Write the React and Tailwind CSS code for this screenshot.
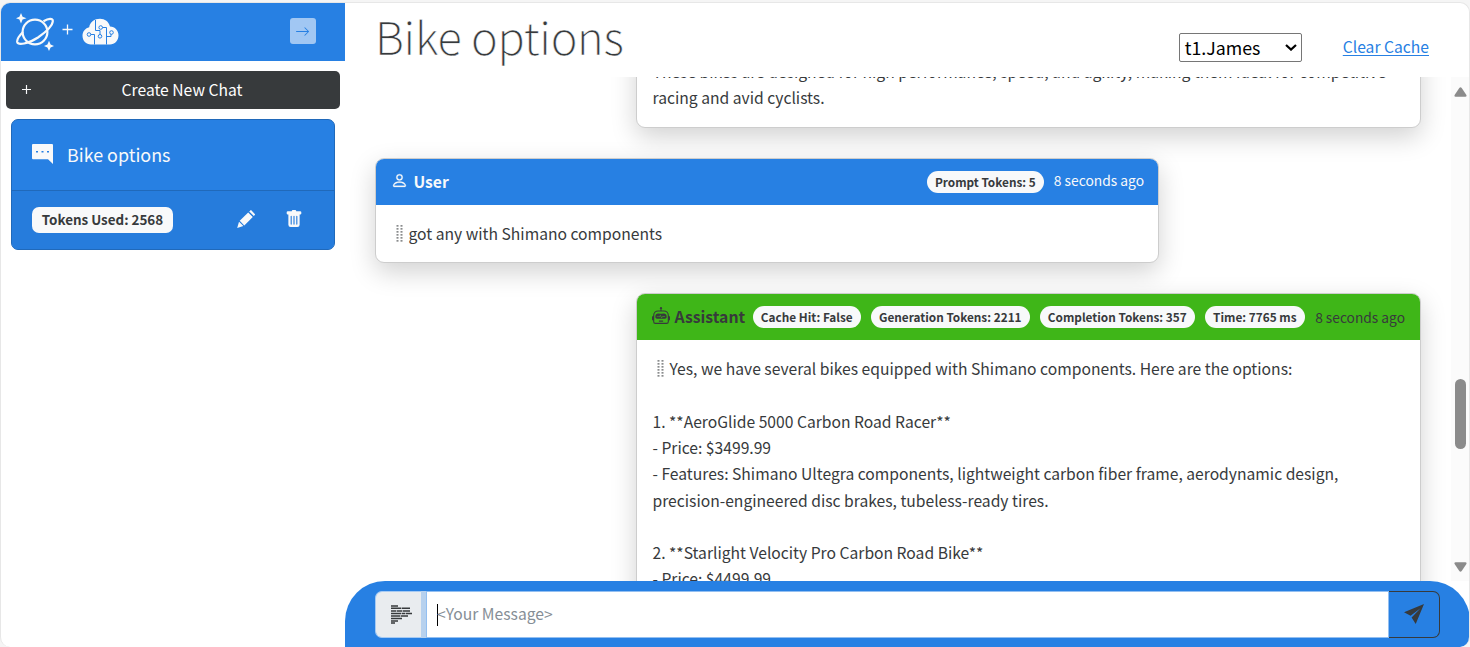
import { BsArrowRight, BsPerson, BsRobot, BsTrashFill } from "react-icons/bs";

const Plus = ({ className }) => (
  <svg className={`h-[11px] w-[11px] shrink-0 ${className}`} viewBox="0 0 11 11" fill="none" stroke="#f8f9fa" strokeWidth="1.3">
    <path d="M5.5 .5V10.5M.5 5.5H10.5" />
  </svg>
);

const Planet = () => (
  <svg className="h-[38px] w-[38px] shrink-0" viewBox="0 0 38 38" fill="none" stroke="#f8f9fa" strokeWidth="2.2">
    <circle cx="19" cy="19" r="12.4" />
    <path d="M27.5 8.2C32.5 5.3 37 4.8 36.8 8.3C36.5 12.5 30 19 22 24.5C12 31 2 32.5 1.2 29C.8 26.5 3 23 7 19" />
    <path d="M5 0L6.6 3.8L10.5 5.2L6.6 6.6L5 10.4L3.4 6.6L0 5.2L3.4 3.8Z" fill="#f8f9fa" stroke="none" />
    <path d="M33 27.8L34.6 31.6L38 33L34.6 34.5L33 38L31.4 34.5L28 33L31.4 31.6Z" fill="#f8f9fa" stroke="none" />
  </svg>
);

const Cloud = () => (
  <svg className="h-[27px] w-[37px] shrink-0" viewBox="0 0 37 27" fill="none">
    <path d="M9 26.5C4 26.5.5 22.7.5 17.8C.5 13.3 3.5 10 7.2 9.2C8 4.2 12.5.8 18 .8C23 .8 26.6 3.6 28 8.4C33 8.6 36.5 12.4 36.5 17.2C36.5 22.5 32.7 26.5 28 26.5Z" fill="#f8f9fa" />
    <g stroke="#2780e3" strokeWidth="1">
      <path d="M13.5 2V12.5H18V16.5M8.8 16.5H12.5V26.5M20.6 9.5H24.5V26.5M24.5 18.5H29V16" />
      <circle cx="7" cy="16.5" r="1.8" />
      <circle cx="18" cy="18.3" r="1.8" />
      <circle cx="18.7" cy="9.5" r="1.8" />
      <circle cx="29.5" cy="14.5" r="1.8" />
    </g>
  </svg>
);

const Chat = () => (
  <svg className="h-[20px] w-[21px] shrink-0" viewBox="0 0 21 20">
    <path d="M1 0H20Q21 0 21 1V20L16 15.3H1Q0 15.3 0 14.3V1Q0 0 1 0Z" fill="#f8f9fa" />
    <path d="M4 7h2v1.6H4zM9.5 7h2v1.6H9.5zM15 7h2v1.6H15z" fill="#2780e3" />
  </svg>
);

const Pencil = () => (
  <svg className="h-[18px] w-[18px] shrink-0" viewBox="0 0 18 18" fill="#f8f9fa">
    <path d="M14.3.3L18 4.2Q18.3 4.6 17.8 5.1L16.8 6L12.2 1.4L13.3.4Q13.8-.1 14.3.3ZM11.2 2.4L15.8 7L7.3 15.4L2.7 10.8ZM2 11.7L6.4 16L.2 17.9Z" />
  </svg>
);

const Grip = () => (
  <svg className="mr-[5px] inline-block h-[17px] w-[8px] align-[-2px]" viewBox="0 0 8 17" fill="#8a8c8d">
    {[0, 3, 6, 9, 12, 15].map((y) => (
      <g key={y}>
        <rect x="0.5" y={y} width="2" height="1.7" />
        <rect x="4.5" y={y} width="2" height="1.7" />
      </g>
    ))}
  </svg>
);

const Prompt = () => (
  <svg className="h-[19px] w-[21px]" viewBox="0 0 21 19" stroke="#373a3c" strokeWidth="1.5">
    <path d="M0 .9H7M0 3.3H10M10.6 3.3H19M0 5.9H5M5.6 5.9H11M11.6 5.9H19M0 8.5H10M10.6 8.5H14M14.6 8.5H21M0 11.1H9M9.6 11.1H17M0 13.5H11M0 15.9H7M0 18.1H4" />
  </svg>
);

const Pill = ({ children, className }) => (
  <span className={`flex h-[22px] shrink-0 items-center justify-center rounded-full bg-[#f8f9fa] text-[11.8px] leading-none font-bold whitespace-nowrap text-[#373a3c] ${className}`}>
    {children}
  </span>
);

const cardBase = "shrink-0 overflow-hidden rounded-[9px] border border-[#cdcdcd] bg-white shadow-[0_9px_26px_rgba(0,0,0,0.18)]";

export default function App() {
  return (
    <div className="h-[647px] w-full overflow-hidden bg-[#f5f5f5] pt-[2px] font-['Noto_Sans_CJK_SC','Noto_Sans',sans-serif] text-[15.66px] leading-[26.25px] text-[#373a3c]">
      <div className="flex h-[645px] overflow-hidden rounded-[10px] border border-b-0 border-[#e7e7e7] bg-white">
        <aside className="w-[344px] shrink-0">
          <header className="flex h-[58px] items-center bg-[#2780e3] pr-[29.5px] pl-[15px]">
            <Planet />
            <Plus className="-mt-[5px] ml-[8px]" />
            <div className="-mt-px ml-[9px]"><Cloud /></div>
            <button className="-mt-[2px] ml-auto flex h-[26px] w-[26px] items-center justify-center rounded-[3px] bg-[#a1c7f3] text-[#2780e3]">
              <BsArrowRight className="h-[15px] w-[15px]" />
            </button>
          </header>
          <button className="mx-[5px] mt-[10px] flex h-[38px] w-[334px] items-center rounded-[5px] bg-[#373a3c] pl-[15px] text-white">
            <Plus className="-mt-[2px] scale-90" />
            <span className="flex-1 pr-[8px] text-center">Create New Chat</span>
          </button>
          <section className="mx-[10px] mt-[10px] h-[131px] w-[324px] overflow-hidden rounded-[7px] border border-[#2069ba] bg-[#2780e3] text-[#f8f9fa]">
            <div className="flex h-[71px] items-center border-b border-[#2069ba] pl-[20px]">
              <span className="-mt-[2px]"><Chat /></span>
              <span className="-mt-px ml-[14px] text-[17.9px]">Bike options</span>
            </div>
            <div className="flex h-[58px] items-center bg-[#267cdc] pl-[20px]">
              <span className="flex h-[26px] w-[141px] items-center justify-center rounded-[7px] bg-[#f8f9fa] pb-px text-[13.4px] font-bold text-[#373a3c]">Tokens Used: 2568</span>
              <span className="-mt-[3px] ml-[64px]"><Pencil /></span>
              <BsTrashFill className="-mt-[3px] ml-[30px] h-[18px] w-[18px]" />
            </div>
          </section>
        </aside>

        <main className="flex min-w-0 flex-1 flex-col">
          <div className="flex h-[74px] shrink-0 items-start justify-between pr-[40px] pl-[30px]">
            <h1 className="-mt-px text-[45px] leading-[68px] font-extralight tracking-[-0.27px] [-webkit-text-stroke:0.5px_white]">Bike options</h1>
            <div className="flex items-center pt-[30px]">
              <div className="flex h-[29px] w-[123px] items-center justify-between rounded-[2px] border border-[#767676] pr-[4px] pl-[5px] text-[17.8px] text-black">
                <span>t1.James</span>
                <svg className="h-[7px] w-[12px]" viewBox="0 0 12 7" fill="none" stroke="#000" strokeWidth="2.2"><path d="M1 1L6 5.6L11 1" /></svg>
              </div>
              <a className="ml-[41px] text-[#2780e3] underline underline-offset-[2px]">Clear Cache</a>
            </div>
          </div>

          <div className="flex h-[504px] shrink-0">
            <div className="flex min-w-0 flex-1 flex-col overflow-hidden pr-[30px] pl-[30px]">
              <article className={`${cardBase} -mt-[36px] h-[87px] w-[785px] self-end px-[15.5px] pt-[17px]`}>
                <p className="whitespace-nowrap">These bikes are designed for high performance, speed, and agility, making them ideal for competitive<br />racing and avid cyclists.</p>
              </article>

              <article className={`${cardBase} mt-[30px] h-[105px] w-[784px]`}>
                <header className="flex h-[46px] items-center bg-[#2780e3] pr-[14px] pl-[15px] text-[#f8f9fa]">
                  <BsPerson className="-mt-[3px] h-[17px] w-[17px]" strokeWidth="0.3" />
                  <b className="ml-[5.5px]">User</b>
                  <Pill className="ml-auto w-[117px]">Prompt Tokens: 5</Pill>
                  <span className="-mt-[3px] ml-[10px] text-[13.8px]">8 seconds ago</span>
                </header>
                <p className="py-[16px] pl-[19.5px]"><Grip />got any with Shimano components</p>
              </article>

              <article className={`${cardBase} mt-[30px] h-[360px] w-[785px] self-end`}>
                <header className="flex h-[46px] items-center bg-[#3fb618] pr-[15px] pl-[15px]">
                  <BsRobot className="-mt-[3px] h-[18px] w-[18px]" />
                  <b className="ml-[4.5px] flex-1 text-[15.8px]">Assistant</b>
                  <Pill className="w-[108px]">Cache Hit: False</Pill>
                  <Pill className="ml-[10px] w-[159px]">Generation Tokens: 2211</Pill>
                  <Pill className="ml-[10px] w-[155px]">Completion Tokens: 357</Pill>
                  <Pill className="ml-[10px] w-[100px]">Time: 7765 ms</Pill>
                  <span className="ml-[10.4px] text-[13.75px] whitespace-nowrap">8 seconds ago</span>
                </header>
                <div className="px-[15.5px] py-[16px] whitespace-nowrap">
                  <p className="pl-[4px] tracking-[0.01px]"><Grip />Yes, we have several bikes equipped with Shimano components. Here are the options:</p>
                  <p className="mt-[26.25px]">1. **AeroGlide 5000 Carbon Road Racer**</p>
                  <p>- Price: $3499.99</p>
                  <p>- Features: Shimano Ultegra components, lightweight carbon fiber frame, aerodynamic design,</p>
                  <p className="-mb-[0.5px] pt-[0.5px]">precision-engineered disc brakes, tubeless-ready tires.</p>
                  <p className="mt-[26.25px]">2. **Starlight Velocity Pro Carbon Road Bike**</p>
                  <p>- Price: $4499.99</p>
                </div>
              </article>
            </div>
            <div className="flex w-[18px] shrink-0 flex-col items-center bg-[#fbfbfb] pt-[10px] pb-[9px]">
              <svg className="h-[10px] w-[13px]" viewBox="0 0 13 10" fill="#8b8b8b"><path d="M5.3 1Q6.5-.6 7.7 1L12.4 8Q13 9.8 11.4 9.8H1.6Q0 9.8.6 8Z" /></svg>
              <div className="mt-[282px] h-[70px] w-[11px] rounded-full bg-[#8b8b8b]" />
              <svg className="mt-auto h-[10px] w-[13px] rotate-180" viewBox="0 0 13 10" fill="#8b8b8b"><path d="M5.3 1Q6.5-.6 7.7 1L12.4 8Q13 9.8 11.4 9.8H1.6Q0 9.8.6 8Z" /></svg>
            </div>
          </div>

          <footer className="-mr-px flex h-[66px] shrink-0 rounded-t-[40px] rounded-br-[9px] bg-[#2780e3] pt-[10px] pr-[30px] pl-[30px]">
            <div className="flex h-[47px] w-[46px] items-center justify-center rounded-l-[7px] border border-r-0 border-[#a6caf3] bg-[#e9ecef] pl-[5px]"><Prompt /></div>
            <div className="h-[47px] w-[5px] bg-[#b7d1ee]" />
            <div className="flex h-[47px] flex-1 items-center border border-[#93bff1] bg-white pl-[10px] text-[#868e96]">
              <span className="h-[22px] w-px bg-black" />
              <span className="-ml-px">&lt;Your Message&gt;</span>
            </div>
            <div className="flex h-[47px] w-[51px] items-center justify-center rounded-r-[7px] border border-l-0 border-[#373a3c]">
              <svg className="-mt-[2px] h-[20px] w-[20px]" viewBox="0 0 20 20" fill="#373a3c"><path d="M20 0L11.7 20L7.6 13.6L16.5 4.2L6.6 11.8L0 8.3Z" /></svg>
            </div>
          </footer>
        </main>
      </div>
    </div>
  );
}
